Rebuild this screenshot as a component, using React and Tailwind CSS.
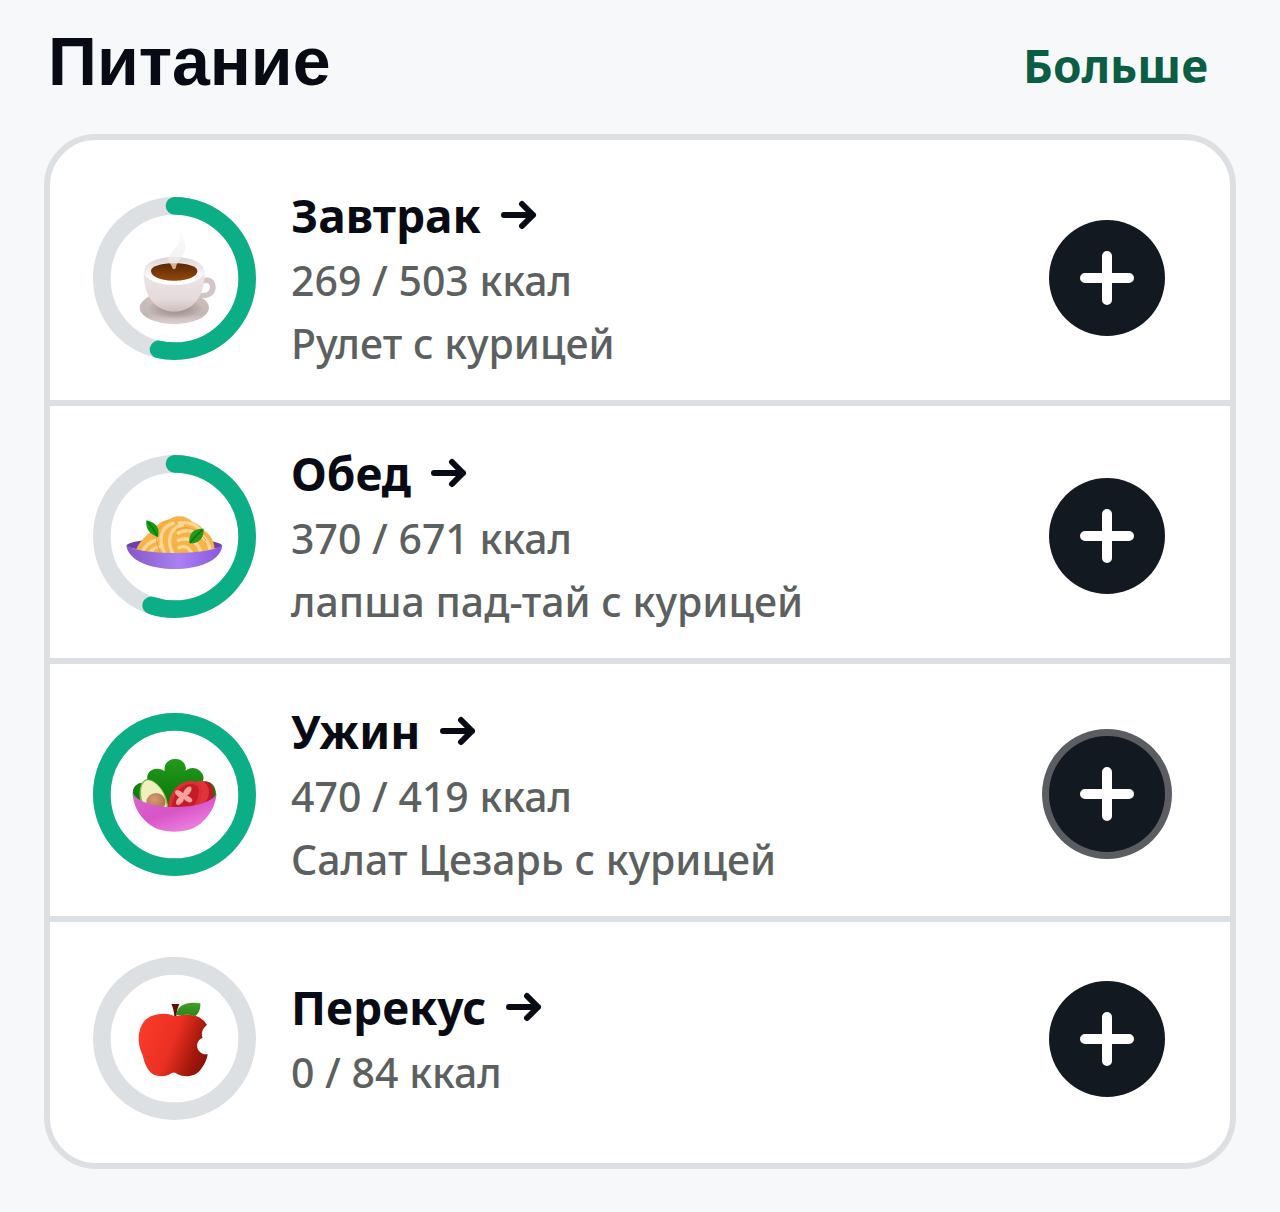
import React from "react";

function Coffee() {
  return (
    <g>
      <defs>
        <linearGradient id="cup" x1="0" y1="0" x2="0" y2="1">
          <stop offset="0" stopColor="#eee6e7" />
          <stop offset="0.7" stopColor="#e6dadb" />
          <stop offset="1" stopColor="#cdbebd" />
        </linearGradient>
        <linearGradient id="saucer" x1="0" y1="0" x2="0" y2="1">
          <stop offset="0" stopColor="#cfc3c2" />
          <stop offset="0.7" stopColor="#c4b7b5" />
          <stop offset="1" stopColor="#dccfce" />
        </linearGradient>
        <radialGradient id="saucerShade" cx="0.5" cy="0.4" r="0.5">
          <stop offset="0" stopColor="#8f807d" />
          <stop offset="1" stopColor="#8f807d" stopOpacity="0" />
        </radialGradient>
        <linearGradient id="rim" x1="0" y1="0" x2="0" y2="1">
          <stop offset="0" stopColor="#ded4d5" />
          <stop offset="0.45" stopColor="#f1ebeb" />
          <stop offset="0.75" stopColor="#ffffff" />
        </linearGradient>
        <linearGradient id="brew" x1="0" y1="0" x2="0" y2="1">
          <stop offset="0" stopColor="#5a2708" />
          <stop offset="1" stopColor="#934808" />
        </linearGradient>
        <linearGradient id="steam" x1="0" y1="0" x2="0" y2="1">
          <stop offset="0" stopColor="#fbfafa" />
          <stop offset="0.7" stopColor="#f1eeee" />
          <stop offset="1" stopColor="#f3dcb8" />
        </linearGradient>
      </defs>
      <ellipse cx="272" cy="362" rx="104" ry="49" fill="url(#saucer)" />
      <ellipse cx="276" cy="370" rx="84" ry="34" fill="url(#saucerShade)" />
      <path d="M354 277 C378 262 397 280 396 302 C395 325 374 338 343 332 L350 317 C368 320 379 313 379 300 C379 287 368 285 358 292 Z" fill="#d3c5c6" />
      <path d="M180 252 C178 328 216 374 271 374 C328 374 365 328 362 252 Z" fill="url(#cup)" />
      <ellipse cx="271" cy="252" rx="91" ry="42" fill="url(#rim)" />
      <path d="M202 251 C202 221 341 221 341 251 C341 291 202 291 202 251 Z" fill="url(#brew)" />
      <path d="M287 130 C290 155 291 163 277 180 C262 198 252 207 255 223 C260 233 264 235 266 243 C270 249 276 247 277 240 C280 224 296 212 303 192 C309 172 300 151 287 130 Z" fill="url(#steam)" opacity="0.75" />
    </g>
  );
}

function Pasta() {
  return (
    <g>
      <defs>
        <linearGradient id="dish" x1="0" y1="0" x2="1" y2="0">
          <stop offset="0" stopColor="#8656c4" />
          <stop offset="0.55" stopColor="#a981f4" />
          <stop offset="1" stopColor="#8955dd" />
        </linearGradient>
        <clipPath id="noodles">
          <path d="M154 326 C165 281 199 269 220 241 C235 225 253 226 266 218 C287 209 312 215 326 230 C351 239 356 252 370 263 C386 276 395 299 393 326 Z" />
        </clipPath>
      </defs>
      <ellipse cx="272" cy="301" rx="143" ry="19" fill="#6d40a8" />
      <g clipPath="url(#noodles)">
        <rect x="150" y="210" width="250" height="118" fill="#f7b347" />
        <g fill="none" stroke="#fdd796" strokeWidth="10" strokeLinecap="round">
          <path d="M172 328 Q184 296 220 284" />
          <path d="M196 328 Q203 311 228 304" />
          <path d="M245 328 C222 286 230 247 268 235" />
          <path d="M269 328 C246 284 260 248 296 240" />
          <path d="M288 234 C317 230 340 240 348 256" />
          <path d="M284 264 C316 249 347 260 364 284" />
          <path d="M284 286 C316 274 345 290 352 326" />
          <path d="M286 308 C304 300 318 309 324 326" />
          <path d="M364 280 Q380 300 380 326" />
        </g>
        <g fill="none" stroke="#eda02e" strokeWidth="3">
          <path d="M232 326 C208 278 217 244 256 226" />
          <path d="M276 256 C309 238 344 254 368 288" />
        </g>
      </g>
      <path d="M188 226 C217 233 230 248 223 276 C197 268 185 251 188 226 Z" fill="#179b13" />
      <path d="M192 230 Q209 249 222 274" fill="none" stroke="#057407" strokeWidth="4" />
      <path d="M360 252 C333 249 314 264 317 295 C343 297 361 282 360 252 Z" fill="#25981b" />
      <path d="M356 255 Q336 272 319 293" fill="none" stroke="#057407" strokeWidth="4" />
      <path d="M128 300 C164 332 381 332 416 300 C409 396 138 396 128 300 Z" fill="url(#dish)" />
    </g>
  );
}

function Salad() {
  return (
    <g>
      <defs>
        <linearGradient id="bowl" x1="0" y1="0" x2="0.7" y2="1">
          <stop offset="0" stopColor="#d968ca" />
          <stop offset="0.55" stopColor="#d854c8" />
          <stop offset="1" stopColor="#ee83df" />
        </linearGradient>
        <linearGradient id="lettuce" x1="0" y1="0" x2="0" y2="1">
          <stop offset="0" stopColor="#239b1b" />
          <stop offset="1" stopColor="#087209" />
        </linearGradient>
        <radialGradient id="pit" cx="0.4" cy="0.35" r="0.7">
          <stop offset="0" stopColor="#d69c75" />
          <stop offset="1" stopColor="#ad7048" />
        </radialGradient>
      </defs>
      <path d="M148 272 C145 250 163 238 178 239 C185 229 186 231 191 229 C188 209 206 195 224 198 C234 198 238 202 243 204 C240 183 253 168 275 168 C296 168 309 184 306 203 C318 192 337 192 349 204 C360 214 362 224 357 236 C379 232 398 245 397 277 L380 315 L165 315 Z" fill="url(#lettuce)" />
      <ellipse cx="364" cy="268" rx="26" ry="33" fill="#be1725" />
      <ellipse cx="350" cy="268" rx="26" ry="35" fill="#e0343a" />
      <path d="M172 304 C162 268 170 230 190 229 C218 230 254 272 253 316 Z" fill="#8fb548" />
      <path d="M179 304 C165 266 174 232 193 232 C219 234 249 272 249 316 Z" fill="#eef1bf" />
      <ellipse cx="217" cy="297" rx="29" ry="27" fill="url(#pit)" />
      <path d="M253 316 C255 272 280 239 316 234 C344 231 358 249 355 271 C352 290 345 304 333 316 Z" fill="#e02d35" />
      <path d="M264 316 C266 278 287 250 315 244 C340 240 349 254 345 274 C341 292 334 306 324 316 Z" fill="#c21d27" />
      <g fill="#f6a39c">
        <ellipse cx="289" cy="274" rx="17" ry="9" transform="rotate(35 289 274)" />
        <ellipse cx="313" cy="288" rx="14" ry="8" transform="rotate(30 313 288)" />
        <ellipse cx="311" cy="265" rx="17" ry="9" transform="rotate(-52 311 265)" />
        <ellipse cx="289" cy="293" rx="15" ry="9" transform="rotate(-50 289 293)" />
      </g>
      <path d="M146 266 C166 328 379 326 399 270 C396 308 379 335 358 355 C321 397 223 397 187 355 C164 334 149 307 146 266 Z" fill="url(#bowl)" />
    </g>
  );
}

function Apple() {
  return (
    <g transform="translate(0 -3)">
      <defs>
        <linearGradient id="skin" x1="0" y1="0.25" x2="1" y2="0.6">
          <stop offset="0" stopColor="#fb3a2b" />
          <stop offset="0.5" stopColor="#ea3022" />
          <stop offset="0.85" stopColor="#a3170b" />
          <stop offset="1" stopColor="#8e1209" />
        </linearGradient>
        <linearGradient id="leaf" x1="0" y1="0" x2="0" y2="1">
          <stop offset="0" stopColor="#449f27" />
          <stop offset="1" stopColor="#26861a" />
        </linearGradient>
      </defs>
      <path d="M270 210 C254 201 224 201 202 211 C177 221 164 250 165 282 C166 301 171 315 177 328 C183 356 193 375 207 384 C221 393 249 393 263 382 C269 378 275 379 281 384 C304 396 335 392 350 372 C360 359 370 343 372 324 C360 328 345 319 341 305 C338 292 346 278 357 276 C350 263 359 244 370 237 C359 219 347 213 331 208 C309 205 288 206 276 211 Z" fill="url(#skin)" />
      <path d="M263 174 L287 174 Q279 190 278 211 L272 211 Q270 188 263 174 Z" fill="#601208" />
      <path d="M278 208 C278 180 306 164 350 172 C351 190 345 203 335 210 C315 204 296 207 278 208 Z" fill="url(#leaf)" />
    </g>
  );
}

const meals = [
  { name: "Завтрак", eaten: 269, goal: 503, dish: "Рулет с курицей", Icon: Coffee },
  { name: "Обед", eaten: 370, goal: 671, dish: "лапша пад-тай с курицей", Icon: Pasta },
  { name: "Ужин", eaten: 470, goal: 419, dish: "Салат Цезарь с курицей", Icon: Salad, active: true },
  { name: "Перекус", eaten: 0, goal: 84, Icon: Apple },
];

function Ring({ value, children }) {
  return (
    <svg viewBox="28 30 489 489" className="size-[163px] shrink-0" aria-hidden="true">
      <circle cx="272.5" cy="274.5" r="218" fill="none" stroke="#dce0e3" strokeWidth="53" />
      {value > 0 && (
        <circle
          cx="272.5"
          cy="274.5"
          r="218"
          fill="none"
          stroke="#0bae85"
          strokeWidth="53"
          strokeLinecap="round"
          pathLength="100"
          strokeDasharray={`${Math.min(value, 1) * 100} 100`}
          transform="rotate(-90 272.5 274.5)"
        />
      )}
      {children}
    </svg>
  );
}

function Meal({ name, eaten, goal, dish, Icon, active }) {
  return (
    <li className="flex items-center border-b-6 border-[#dce0e3] pt-[33px] pr-[65px] pb-[25px] pl-[43px] last:border-b-0 last:pt-[35px]">
      <Ring value={eaten / goal}>
        <Icon />
      </Ring>
      <div className="ml-[35px] min-w-0 flex-1">
        <h2 className="text-[46px] leading-[68px] font-bold text-[#080b13]">
          <a href="#" className="inline-flex items-center gap-5">
            {name}
            <svg viewBox="0 0 36 30" className="h-[30px] w-9" fill="none" stroke="currentColor" strokeWidth="6" strokeLinecap="round" strokeLinejoin="round" aria-hidden="true">
              <path d="M3 15 H32 M21 4 L32 15 L21 26" />
            </svg>
          </a>
        </h2>
        <p className="text-[41px] leading-[63px] font-medium text-[#5c605f]">{eaten} / {goal} ккал</p>
        {dish && <p className="text-[41px] leading-[63px] font-medium text-[#5c605f]">{dish}</p>}
      </div>
      <button
        type="button"
        aria-label={`Добавить: ${name}`}
        className={`flex size-[116px] shrink-0 items-center justify-center rounded-full bg-[#121920] text-white ${active ? "ring-7 ring-[#5a5d62]" : ""}`}
      >
        <svg viewBox="0 0 54 54" className="size-[54px]" fill="none" stroke="currentColor" strokeWidth="10" strokeLinecap="round" aria-hidden="true">
          <path d="M27 5 V49 M5 27 H49" />
        </svg>
      </button>
    </li>
  );
}

export default function App() {
  return (
    <main className="min-h-screen bg-[#f6f8fa] px-11 pb-11 font-['Noto_Sans',sans-serif]">
      <header className="flex h-[134px] items-center justify-between pr-7 pb-2 pl-1">
        <h1 className="pb-1 font-['Liberation_Sans',sans-serif] text-[68px] leading-[80px] font-bold text-[#080b13]">Питание</h1>
        <a href="#" className="pt-1 text-[46px] leading-[64px] font-bold text-[#0b5d44]">Больше</a>
      </header>
      <ul className="rounded-[52px] border-6 border-[#dce0e3] bg-white pt-2 pb-[18px]">
        {meals.map((meal) => (
          <Meal key={meal.name} {...meal} />
        ))}
      </ul>
    </main>
  );
}
